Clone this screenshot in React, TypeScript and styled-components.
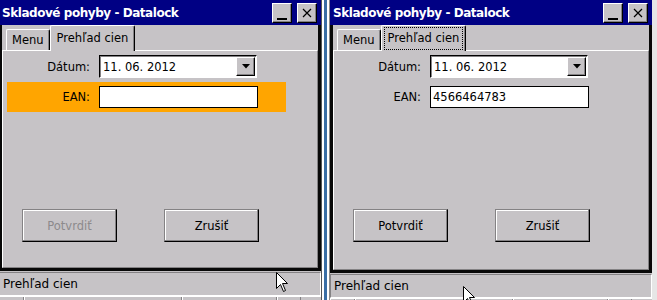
import React from 'react';
import styled, { createGlobalStyle } from 'styled-components';

const FACE = '#c6c3c6';
const SHADOW = '#848284';
const NAVY = '#000084';

const GlobalStyle = createGlobalStyle`
  html, body {
    margin: 0;
    padding: 0;
    background: #ffffff;
  }
  body {
    font-family: "DejaVu Sans", Tahoma, sans-serif;
    font-size: 11.5px;
    color: #000;
  }
`;

const Desktop = styled.div`
  position: relative;
  display: flex;
  width: 657px;
  height: 300px;
  overflow: hidden;
  background: #e6e6e6;
`;

const Frame = styled.div<{ $shift: number }>`
  display: flex;
  flex-direction: column;
  flex: none;
  width: 322px;
  height: 300px;
  margin-left: ${(p) => p.$shift}px;
  background: ${FACE};
`;

const TitleBar = styled.div`
  display: flex;
  align-items: center;
  height: 25px;
  padding: 1px 4px 0 3px;
  box-sizing: border-box;
  background: ${NAVY};
`;

const Title = styled.div`
  flex: 1;
  color: #fff;
  font-weight: bold;
  font-size: 12px;
  letter-spacing: -0.45px;
  white-space: nowrap;
`;

const CaptionButton = styled.div`
  display: flex;
  align-items: center;
  justify-content: center;
  width: 20px;
  height: 20px;
  margin-left: 5px;
  box-sizing: border-box;
  background: ${FACE};
  border: 1px solid;
  border-color: #fff #000 #000 #fff;
  box-shadow: inset -1px -1px ${SHADOW};
`;

const MinimizeGlyph = styled.span`
  width: 10px;
  height: 2px;
  margin-top: 11px;
  background: #000;
`;

const Client = styled.div`
  display: flex;
  flex-direction: column;
  flex: 1;
  border: 3px solid #080808;
  border-top: none;
`;

const TabStrip = styled.div`
  position: relative;
  z-index: 1;
  display: flex;
  align-items: flex-end;
  height: 25px;
  padding-left: 4px;
`;

const Tab = styled.div<{ $active?: boolean }>`
  display: flex;
  align-items: center;
  box-sizing: border-box;
  height: ${(p) => (p.$active ? 26 : 21)}px;
  margin-bottom: ${(p) => (p.$active ? -1 : 0)}px;
  padding: 0 ${(p) => (p.$active ? 2 : 5)}px;
  background: ${FACE};
  border-top: 1px solid #fff;
  border-left: 1px solid #fff;
  border-right: 1px solid #000;
  border-top-left-radius: 2px;
  border-top-right-radius: 2px;
  box-shadow: inset -1px 0 ${SHADOW};
  white-space: nowrap;
`;

const TabCaption = styled.span<{ $focused?: boolean }>`
  padding: 3px 3px 4px 3px;
  border: 1px dotted ${(p) => (p.$focused ? '#000' : 'transparent')};
`;

const Panel = styled.div`
  display: flex;
  flex-direction: column;
  flex: 1;
  padding: 4px 0 0 4px;
  border: 1px solid;
  border-color: #fff ${SHADOW} ${SHADOW} #fff;
`;

const FormRow = styled.div<{ $highlight?: boolean; $height: number }>`
  display: flex;
  align-items: center;
  width: 279px;
  height: ${(p) => p.$height}px;
  margin-bottom: 4px;
  background: ${(p) => (p.$highlight ? '#ffa500' : 'transparent')};
`;

const Label = styled.div`
  width: 83px;
  margin-right: 9px;
  text-align: right;
  white-space: nowrap;
`;

const Combo = styled.div`
  display: flex;
  align-items: center;
  width: 158px;
  height: 23px;
  box-sizing: border-box;
  background: #fff;
  border: 1px solid;
  border-color: #000 #fff #fff #000;
  box-shadow: inset 1px 1px ${SHADOW};
`;

const ComboValue = styled.div`
  flex: 1;
  padding-left: 3px;
`;

const DropButton = styled.div`
  display: flex;
  align-items: center;
  justify-content: center;
  width: 19px;
  height: 19px;
  margin-right: 1px;
  box-sizing: border-box;
  background: ${FACE};
  border: 1px solid;
  border-color: #fff #000 #000 #fff;
  box-shadow: inset -1px -1px ${SHADOW};
`;

const TextField = styled.div`
  display: flex;
  align-items: center;
  width: 159px;
  height: 22px;
  padding-left: 2px;
  box-sizing: border-box;
  background: #fff;
  border: 1px solid #000;
`;

const ButtonRow = styled.div`
  display: flex;
  gap: 47px;
  margin-top: 93px;
  padding-left: 15px;
`;

const PushButton = styled.div<{ $disabled?: boolean }>`
  display: flex;
  align-items: center;
  justify-content: center;
  width: 95px;
  height: 33px;
  box-sizing: border-box;
  color: ${(p) => (p.$disabled ? '#8c8a8c' : '#000')};
  background: ${FACE};
  border: 1px solid;
  border-color: ${SHADOW} #000 #000 ${SHADOW};
  box-shadow: inset -1px -1px ${SHADOW}, inset 1px 1px #fff;
`;

const StatusBar = styled.div`
  display: flex;
  align-items: center;
  height: 24px;
  margin-top: 1px;
  padding-left: 3px;
  box-sizing: border-box;
  border: 1px solid;
  border-color: ${SHADOW} #fff #fff ${SHADOW};
  font-size: 12px;
`;

const Footer = styled.div<{ $height: number }>`
  display: flex;
  height: ${(p) => p.$height}px;
  border-top: 1px solid #fff;
  box-sizing: border-box;
`;

const FooterCell = styled.div<{ $width: number }>`
  width: ${(p) => p.$width}px;
  border-right: 1px solid ${SHADOW};
  box-shadow: inset 1px 0 #fff;
`;

const Divider = styled.div`
  flex: none;
  width: 9px;
  height: 300px;
  box-sizing: border-box;
  border-left: 1px solid #555;
  border-right: 1px solid #8a8a8a;
  background: linear-gradient(to right, #fff 0 2px, #3a6ea5 2px 5px, #fff 5px 7px);
`;

const Pointer = styled.svg<{ $x: number; $y: number }>`
  position: absolute;
  left: ${(p) => p.$x}px;
  top: ${(p) => p.$y}px;
  width: 13px;
  height: 21px;
`;

function Cursor({ x, y }: { x: number; y: number }) {
  return (
    <Pointer $x={x} $y={y} viewBox="0 0 13 21">
      <path d="M0.5 0.5 L0.5 16.5 L4.5 12.5 L7.5 19.5 L9.5 18.5 L6.5 11.5 L11.5 11.5 Z" fill="#fff" stroke="#000" strokeWidth="1" />
    </Pointer>
  );
}

interface WindowProps {
  shift: number;
  highlight?: boolean;
  ean: string;
  confirmEnabled?: boolean;
  tabFocused?: boolean;
  footer: number;
}

function DatalockWindow(props: WindowProps) {
  return (
    <Frame $shift={props.shift}>
      <TitleBar>
        <Title>Skladové pohyby - Datalock</Title>
        <CaptionButton>
          <MinimizeGlyph />
        </CaptionButton>
        <CaptionButton>
          <svg width="10" height="10" viewBox="0 0 10 10">
            <path d="M1 1 L9 9 M9 1 L1 9" stroke="#000" strokeWidth="1.2" />
          </svg>
        </CaptionButton>
      </TitleBar>
      <Client>
        <TabStrip>
          <Tab>Menu</Tab>
          <Tab $active>
            <TabCaption $focused={props.tabFocused}>Prehľad cien</TabCaption>
          </Tab>
        </TabStrip>
        <Panel>
          <FormRow $height={23}>
            <Label>Dátum:</Label>
            <Combo>
              <ComboValue>11. 06. 2012</ComboValue>
              <DropButton>
                <svg width="8" height="5" viewBox="0 0 8 5">
                  <path d="M0 0 H8 L4 4.5 Z" fill="#000" />
                </svg>
              </DropButton>
            </Combo>
          </FormRow>
          <FormRow $height={30} $highlight={props.highlight}>
            <Label>EAN:</Label>
            <TextField>{props.ean}</TextField>
          </FormRow>
          <ButtonRow>
            <PushButton $disabled={!props.confirmEnabled}>Potvrdiť</PushButton>
            <PushButton>Zrušiť</PushButton>
          </ButtonRow>
        </Panel>
      </Client>
      <StatusBar>Prehľad cien</StatusBar>
      <Footer $height={props.footer}>
        <FooterCell $width={24} />
        <FooterCell $width={157} />
        <FooterCell $width={94} />
        <FooterCell $width={23} />
      </Footer>
    </Frame>
  );
}

export default function App() {
  return (
    <>
      <GlobalStyle />
      <Desktop>
        <DatalockWindow shift={-1} highlight ean="" footer={4} />
        <Divider />
        <DatalockWindow shift={0} ean="4566464783" confirmEnabled tabFocused footer={2} />
        <Cursor x={276} y={272} />
        <Cursor x={463} y={286} />
      </Desktop>
    </>
  );
}
